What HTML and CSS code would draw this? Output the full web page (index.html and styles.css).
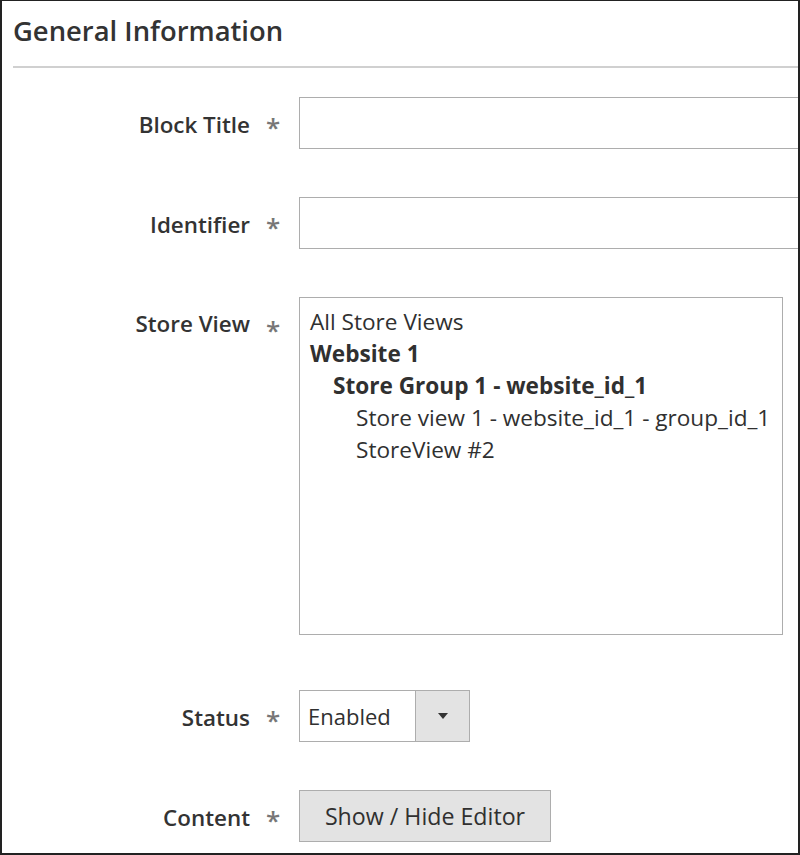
FILE: index.html
```html
<!DOCTYPE html>
<html>
<head>
<meta charset="utf-8">
<link rel="stylesheet" href="styles.css">
</head>
<body>
<div class="page">
  <div class="section-head">
    <h1 class="section-title">General Information</h1>
  </div>
  <div class="form">
    <div class="field">
      <div class="label">Block Title</div>
      <div class="req">*</div>
      <div class="control"><div class="input wide"></div></div>
    </div>
    <div class="field">
      <div class="label">Identifier</div>
      <div class="req">*</div>
      <div class="control"><div class="input wide"></div></div>
    </div>
    <div class="field field-top">
      <div class="label">Store View</div>
      <div class="req">*</div>
      <div class="control">
        <div class="multiselect">
          <div class="opt">All Store Views</div>
          <div class="opt bold">Website 1</div>
          <div class="opt bold lvl1">Store Group 1 - website_id_1</div>
          <div class="opt lvl2">Store view 1 - website_id_1 - group_id_1</div>
          <div class="opt lvl2">StoreView #2</div>
        </div>
      </div>
    </div>
    <div class="field">
      <div class="label">Status</div>
      <div class="req">*</div>
      <div class="control">
        <div class="select">
          <span class="select-value">Enabled</span>
          <span class="select-arrow"><span class="tri"></span></span>
        </div>
      </div>
    </div>
    <div class="field">
      <div class="label">Content</div>
      <div class="req">*</div>
      <div class="control"><div class="button">Show / Hide Editor</div></div>
    </div>
  </div>
</div>
</body>
</html>
```

FILE: styles.css
```css
html, body {
  margin: 0;
  padding: 0;
  background: #fff;
}
.page {
  box-sizing: border-box;
  width: 800px;
  height: 855px;
  border: 2px solid #222;
  border-top-width: 1px;
  background: #fff;
  overflow: hidden;
  font-family: "Open Sans", "Liberation Sans", sans-serif;
  color: #303030;
}
.section-head {
  margin-left: 11px;
  padding-top: 11px;
  padding-bottom: 16px;
  border-bottom: 2px solid #d0d0d0;
}
.section-title {
  margin: 0;
  font-size: 27.4px;
  font-weight: 600;
  line-height: 38px;
  color: #333;
}
.form {
  padding-top: 29px;
}
.field {
  display: flex;
  align-items: center;
  margin-bottom: 48px;
}
.field-top {
  align-items: flex-start;
  margin-bottom: 55px;
}
.label {
  flex: none;
  width: 248px;
  text-align: right;
  font-size: 22.4px;
  font-weight: 600;
  line-height: 30px;
  color: #333;
  padding-top: 3px;
}
.field-top .label {
  padding-top: 12px;
}
.req {
  flex: none;
  width: 49px;
  padding-left: 16px;
  box-sizing: border-box;
  font-size: 26px;
  font-weight: 600;
  line-height: 30px;
  color: #777;
  height: 38px;
  padding-top: 8px;
}
.field-top .req {
  padding-top: 18px;
  height: 48px;
}
.control {
  flex: 1;
  min-width: 0;
  display: flex;
}
.input {
  box-sizing: border-box;
  height: 52px;
  border: 1px solid #adadad;
  background: #fff;
}
.wide {
  width: 620px;
  flex: none;
}
.multiselect {
  box-sizing: border-box;
  width: 484px;
  height: 338px;
  border: 1px solid #adadad;
  padding: 8px 10px;
  font-size: 22.6px;
  line-height: 32px;
  white-space: nowrap;
}
.opt.bold {
  font-weight: 700;
}
.lvl1 {
  padding-left: 23px;
}
.lvl2 {
  padding-left: 46px;
}
.select {
  box-sizing: border-box;
  width: 171px;
  height: 52px;
  border: 1px solid #adadad;
  display: flex;
  font-size: 22px;
}
.select-value {
  flex: 1;
  padding-left: 8px;
  line-height: 50px;
}
.select-arrow {
  width: 53px;
  border-left: 1px solid #adadad;
  background: #e3e3e3;
  display: flex;
  align-items: center;
  justify-content: center;
}
.tri {
  width: 0;
  height: 0;
  border-left: 5px solid transparent;
  border-right: 5px solid transparent;
  border-top: 6px solid #333;
}
.button {
  box-sizing: border-box;
  width: 252px;
  height: 52px;
  border: 1px solid #adadad;
  background: #e3e3e3;
  font-size: 23.2px;
  line-height: 50px;
  text-align: center;
  color: #303030;
}
```
